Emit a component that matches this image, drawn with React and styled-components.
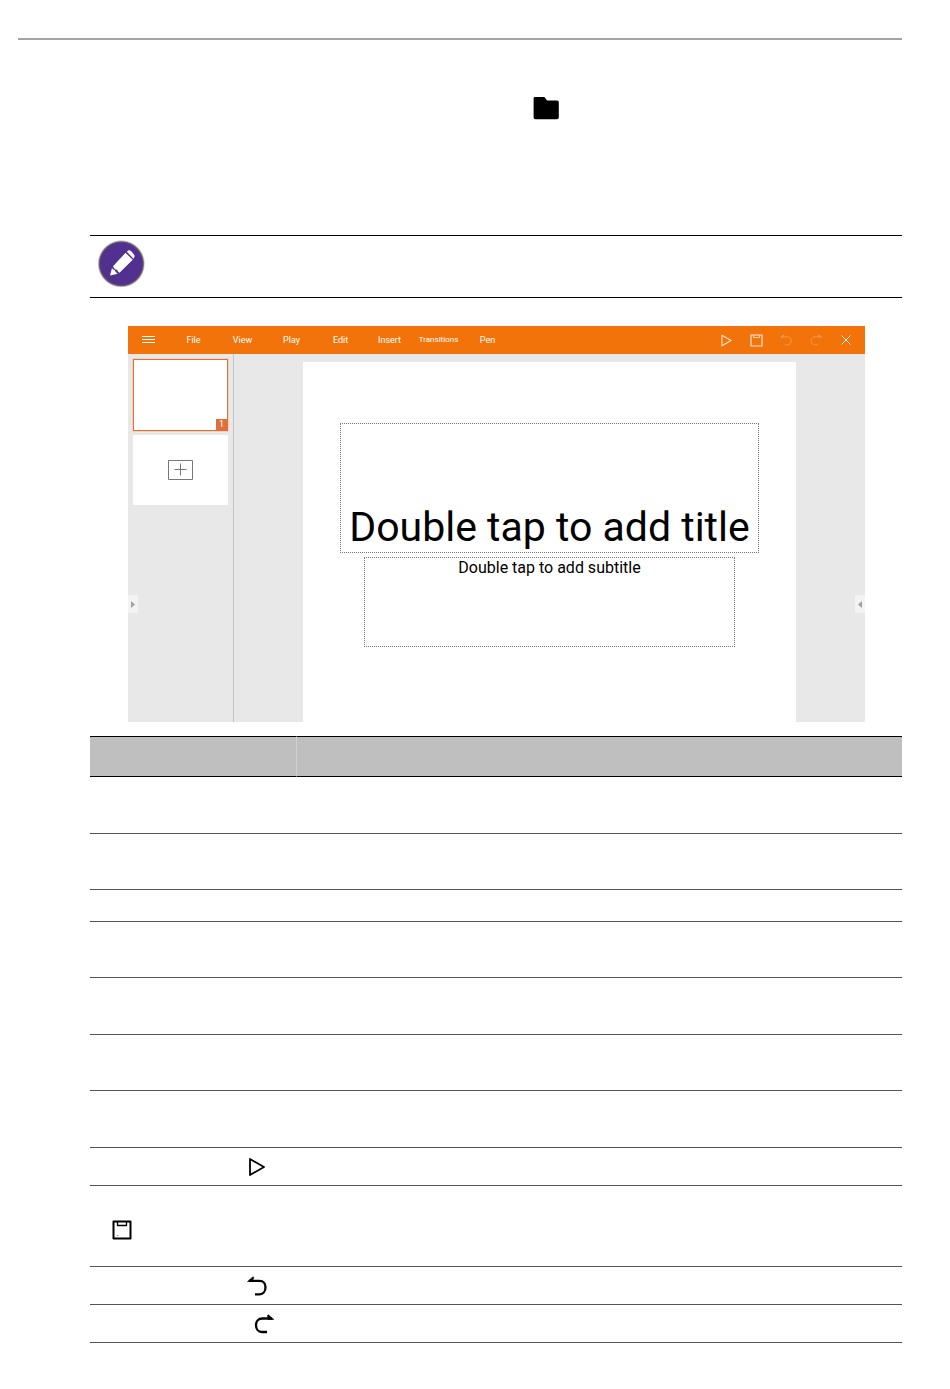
import React from 'react';
import styled, { createGlobalStyle } from 'styled-components';

const GlobalStyle = createGlobalStyle`
  * {
    box-sizing: border-box;
  }

  body {
    margin: 0;
    background: #fff;
    color: #000;
    font-family: Roboto, 'Liberation Sans', sans-serif;
  }

  button {
    margin: 0;
    padding: 0;
    border: none;
    background: none;
    color: inherit;
    font: inherit;
    cursor: pointer;
  }

  svg {
    display: block;
    flex: none;
  }
`;

const Page = styled.div`
  padding: 38px 48px 46px 18px;
`;

const PageHeader = styled.header`
  border-top: 2px solid #a3a3a3;
`;

const Main = styled.main`
  margin-left: 72px;
`;

const Intro = styled.section`
  height: 195px;
  padding: 56px 0 0 443px;
`;

const Note = styled.aside`
  height: 63px;
  padding: 4px 7px;
  border-top: 1px solid #000;
  border-bottom: 1px solid #000;
`;

const Editor = styled.section`
  position: relative;
  display: flex;
  flex-direction: column;
  height: 396px;
  margin: 28px 37px 14px 38px;
  background: #e8e8e8;
`;

const Toolbar = styled.div`
  display: flex;
  align-items: stretch;
  justify-content: space-between;
  height: 28px;
  background: #f3730b;
  color: #fff;
`;

const Menu = styled.nav`
  display: flex;
`;

const MenuButton = styled.button`
  display: flex;
  align-items: center;
  justify-content: center;
  width: ${(p) => (p.$icon ? 41 : 49)}px;
  font-size: ${(p) => (p.$small ? 8 : 9)}px;
  line-height: 12px;
`;

const Tools = styled.div`
  display: flex;
  padding-right: 4px;
`;

const ToolButton = styled.button`
  display: flex;
  align-items: center;
  justify-content: center;
  width: 30px;
  color: ${(p) => (p.$dim ? '#f79c50' : '#ffe9d6')};
`;

const Workspace = styled.div`
  display: flex;
  flex: 1;
`;

const Sidebar = styled.div`
  display: flex;
  flex-direction: column;
  gap: 4px;
  width: 106px;
  padding: 5px;
  border-right: 1px solid #c4c4c4;
`;

const Thumb = styled.button`
  display: flex;
  align-items: flex-end;
  justify-content: flex-end;
  height: 72px;
  border: 1px solid #e0703a;
  background: #fff;
  box-shadow: 0 0 0 1px #f3d3c0;
`;

const ThumbNumber = styled.span`
  width: 11px;
  height: 11px;
  background: #e0703a;
  color: #fff;
  font-size: 9px;
  line-height: 11px;
  text-align: center;
`;

const AddSlide = styled.button`
  display: flex;
  align-items: center;
  justify-content: center;
  height: 70px;
  background: #fff;
`;

const Stage = styled.div`
  display: flex;
  flex: 1;
  padding: 8px 69px 0;
`;

const Slide = styled.div`
  flex: 1;
  padding-top: 61px;
  background: #fff;
`;

const Placeholder = styled.div`
  display: flex;
  justify-content: center;
  border: 1px dotted #777;
`;

const TitleBox = styled(Placeholder)`
  align-items: flex-end;
  height: 130px;
  margin: 0 37px 4px;
`;

const SubtitleBox = styled(Placeholder)`
  align-items: flex-start;
  height: 90px;
  margin: 0 61px;
`;

const Title = styled.h1`
  margin: 0;
  font-size: 41px;
  font-weight: 400;
  line-height: 50px;
  white-space: nowrap;
`;

const Subtitle = styled.p`
  margin: 0;
  font-size: 16px;
  line-height: 20px;
  white-space: nowrap;
`;

const Handle = styled.button`
  position: absolute;
  bottom: 109px;
  ${(p) => p.$side}: 0;
  display: flex;
  align-items: center;
  justify-content: center;
  width: 10px;
  height: 18px;
  background: #f3f3f3;
  color: #a0a0a0;
`;

const Table = styled.table`
  width: 100%;
  table-layout: fixed;
  border-collapse: separate;
  border-spacing: 0;
`;

const HeadCell = styled.th`
  width: ${(p) => p.$width || 'auto'};
  height: 41px;
  padding: 0;
  border-top: 1px solid #000;
  border-bottom: 1px solid #000;
  background: #bfbfbf;

  & + & {
    border-left: 1px solid #d0d0d0;
  }
`;

const Cell = styled.td`
  height: ${(p) => p.$height}px;
  padding: ${(p) => p.$top || 0}px 0 0 ${(p) => p.$indent || 0}px;
  border-bottom: 1px solid #555;
  vertical-align: middle;
`;

const FolderIcon = () => (
  <svg width="26" height="24" viewBox="0 0 26 24" fill="currentColor">
    <path d="M2 1h9.500l2.500 3.500h10q1.800 0 1.800 1.800v15.200q0 1.800-1.800 1.800H2.400Q.6 23.300.6 21.500V2.400Q.6 1 2 1z" />
  </svg>
);

const PencilIcon = () => (
  <svg width="48" height="48" viewBox="0 0 48 48">
    <defs>
      <radialGradient id="rim">
        <stop offset="0.860" stopColor="#51308f" />
        <stop offset="0.920" stopColor="#6b5f6e" />
        <stop offset="1" stopColor="#d8d2b8" stopOpacity="0" />
      </radialGradient>
    </defs>
    <circle cx="24.300" cy="23.800" r="24" fill="url(#rim)" />
    <circle cx="24.300" cy="23.800" r="20.300" fill="#51308f" />
    <path d="M28.500 12.800l7.200 7L22.500 32.800q-1.600-.6-2.300-3-2.800 0-4.200-3.500z" fill="#fff" />
    <path d="M15 28q.8 2 2.900 2.300.5 2.600 2.900 3.400L13 35.500z" fill="#fff" />
    <path d="M29.800 11.700l1.400-1.200q1.400-.8 3 .8l2.400 2.600q1.400 1.600.8 3.200l-.9 1.600z" fill="#fff" />
  </svg>
);

const MenuIcon = () => (
  <svg width="13" height="8" viewBox="0 0 13 8" stroke="currentColor">
    <path d="M0 .5h13M0 3.500h13M0 6.500h13" />
  </svg>
);

const PlayIcon = ({ size, stroke }) => (
  <svg width={size} height={size} viewBox="0 0 20 20" fill="none" stroke="currentColor" strokeWidth={stroke} strokeLinejoin="round">
    <path d="M3 2v16l14-8z" />
  </svg>
);

const SaveIcon = ({ size, stroke }) => (
  <svg width={size} height={size} viewBox="0 0 20 20" fill="none" stroke="currentColor" strokeWidth={stroke} strokeLinejoin="round">
    <path d="M1.500 1.500h17v17h-17z" />
    <path d="M5.500 1.500v4h9v-4" strokeWidth="1.300" />
    <path d="M5.500 15.500h.6" strokeWidth="1" />
  </svg>
);

const UndoIcon = ({ size, stroke }) => (
  <svg width={size} height={size} viewBox="0 0 20 20" fill="none" stroke="currentColor" strokeWidth={stroke}>
    <path d="M2 4.800h10.500c4 0 6 3 6 6.500s-2 7-6 7H8" />
    <path d="M.5 5.600L6 .8l1 .8-2 4z" fill="currentColor" strokeWidth="0.600" />
  </svg>
);

const RedoIcon = ({ size, stroke }) => (
  <svg width={size} height={size} viewBox="0 0 20 20" fill="none" stroke="currentColor" strokeWidth={stroke}>
    <path d="M18 4.500H8.500c-4.500 0-6.500 3-6.500 6.500s2 7 6 7h5" />
    <path d="M19.800 5.400L14.400.8l-1 .8 1 3.800z" fill="currentColor" strokeWidth="0.600" />
  </svg>
);

const CloseIcon = () => (
  <svg width="10" height="10" viewBox="0 0 10 10" stroke="currentColor">
    <path d="M.5.5l9 9M9.500.5l-9 9" />
  </svg>
);

const PlusIcon = () => (
  <svg width="25" height="20" viewBox="0 0 25 20" fill="none" stroke="#777">
    <path d="M.5.5h24v19H.5zM6.500 9.500h12M12.500 3.500v12" />
  </svg>
);

const ArrowIcon = ({ left }) => (
  <svg width="4" height="7" viewBox="0 0 4 7" fill="currentColor">
    <path d={left ? 'M4 0v7L0 3.500z' : 'M0 0v7l4-3.500z'} />
  </svg>
);

const menuItems = ['File', 'View', 'Play', 'Edit', 'Insert', 'Transitions', 'Pen'];

const rows = [
  { height: 57 },
  { height: 56 },
  { height: 32 },
  { height: 56 },
  { height: 57 },
  { height: 56 },
  { height: 57 },
  { height: 38, indent: 157, icon: <PlayIcon size={20} stroke={1.8} /> },
  { height: 81, indent: 22, top: 8, icon: <SaveIcon size={20} stroke={2} /> },
  { height: 38, indent: 157, icon: <UndoIcon size={20} stroke={2.3} /> },
  { height: 38, indent: 164, icon: <RedoIcon size={20} stroke={2.3} /> },
];

const App = () => {
  return (
    <>
      <GlobalStyle />
      <Page>
        <PageHeader />
        <Main>
          <Intro>
            <FolderIcon />
          </Intro>

          <Note>
            <PencilIcon />
          </Note>

          <Editor>
            <Toolbar>
              <Menu>
                <MenuButton $icon aria-label="Menu">
                  <MenuIcon />
                </MenuButton>
                {menuItems.map((item) => (
                  <MenuButton key={item} $small={item.length > 6}>
                    {item}
                  </MenuButton>
                ))}
              </Menu>
              <Tools>
                <ToolButton aria-label="Play">
                  <PlayIcon size={13} stroke={1.6} />
                </ToolButton>
                <ToolButton aria-label="Save">
                  <SaveIcon size={13} stroke={1.8} />
                </ToolButton>
                <ToolButton $dim aria-label="Undo">
                  <UndoIcon size={12} stroke={1.4} />
                </ToolButton>
                <ToolButton $dim aria-label="Redo">
                  <RedoIcon size={12} stroke={1.4} />
                </ToolButton>
                <ToolButton aria-label="Close">
                  <CloseIcon />
                </ToolButton>
              </Tools>
            </Toolbar>

            <Workspace>
              <Sidebar>
                <Thumb>
                  <ThumbNumber>1</ThumbNumber>
                </Thumb>
                <AddSlide aria-label="Add slide">
                  <PlusIcon />
                </AddSlide>
              </Sidebar>
              <Stage>
                <Slide>
                  <TitleBox>
                    <Title>Double tap to add title</Title>
                  </TitleBox>
                  <SubtitleBox>
                    <Subtitle>Double tap to add subtitle</Subtitle>
                  </SubtitleBox>
                </Slide>
              </Stage>
            </Workspace>

            <Handle $side="left" aria-label="Expand left">
              <ArrowIcon />
            </Handle>
            <Handle $side="right" aria-label="Expand right">
              <ArrowIcon left />
            </Handle>
          </Editor>

          <Table>
            <thead>
              <tr>
                <HeadCell $width="206px" />
                <HeadCell />
              </tr>
            </thead>
            <tbody>
              {rows.map((row, i) => (
                <tr key={i}>
                  <Cell $height={row.height} $indent={row.indent} $top={row.top}>
                    {row.icon}
                  </Cell>
                  <Cell $height={row.height} />
                </tr>
              ))}
            </tbody>
          </Table>
        </Main>
      </Page>
    </>
  );
};

export default App;
